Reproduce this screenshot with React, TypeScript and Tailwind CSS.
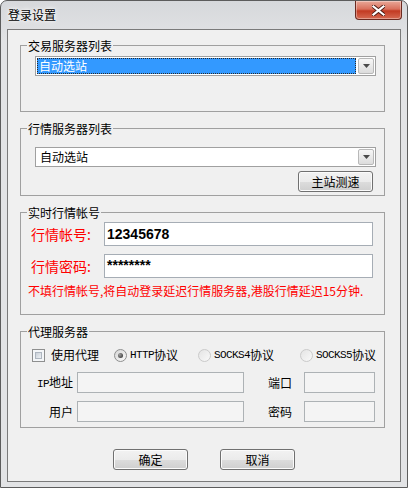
import React from 'react';

function Combo({ selected }: { selected?: boolean }) {
  return (
    <div className="flex h-[20px] w-[341px] items-stretch border border-[#a0a0a0] bg-white p-[1px]">
      {selected ? (
        <div className="flex flex-1 items-center border border-dotted border-[#2a2a2a] bg-[#3399ff] pl-[1px] text-[12px] leading-[14px] text-white">自动选站</div>
      ) : (
        <div className="flex flex-1 items-center pl-[3px] text-[12px] leading-[14px] text-black">自动选站</div>
      )}
      <div className="ml-[2px] flex w-[16px] items-center justify-center rounded-[2px] border border-[#b8b8b8] bg-[linear-gradient(to_bottom,#f7f7f7,#dcdcdc)]">
        <svg width="7" height="4" viewBox="0 0 7 4">
          <path d="M0 0h7L3.5 4z" fill="#4a4a4a" />
        </svg>
      </div>
    </div>
  );
}

function Btn({ label }: { label: string }) {
  return (
    <div className="flex h-[21px] w-[75px] items-center justify-center rounded-[3px] border border-[#707070] bg-[linear-gradient(to_bottom,#f2f2f2_0%,#ebebeb_50%,#dddddd_51%,#cfcfcf_100%)] text-[12px] leading-[14px] shadow-[inset_0_0_0_1px_#fbfbfb]">
      {label}
    </div>
  );
}

function Radio({ checked }: { checked?: boolean }) {
  return checked ? (
    <div className="flex h-[13px] w-[13px] items-center justify-center rounded-full border border-[#8e8f8f] bg-[linear-gradient(135deg,#d6d6d6,#fafafa)]">
      <div className="h-[5px] w-[5px] rounded-full bg-[radial-gradient(circle_at_35%_35%,#a0a0a0,#262626)]" />
    </div>
  ) : (
    <div className="h-[13px] w-[13px] rounded-full border border-[#cacaca] bg-[linear-gradient(135deg,#e4e4e4,#f9f9f9)]" />
  );
}

function Proto({ latin }: { latin: string }) {
  return (
    <span className="flex items-center text-[12px] leading-[16px]">
      <span className="font-['Liberation_Mono',monospace] text-[11px] tracking-[-0.6px]">{latin}</span>
      协议
    </span>
  );
}

export default function App() {
  return (
    <div className="h-[488px] w-[408px] overflow-hidden rounded-t-[7px] border border-[#5c5c5c] bg-[linear-gradient(to_bottom,#d6d8db,#e2e3e5_40px,#e2e3e5)] font-['Noto_Sans_CJK_SC',sans-serif] text-[12px] text-black">
      {/* Title bar */}
      <div className="flex h-[28px] items-start">
        <div className="pl-[7px] pt-[6px] text-[12px] leading-[16px] [text-shadow:0_0_6px_#fff,0_0_3px_#fff]">登录设置</div>
        <div className="ml-auto mr-[5px] flex h-[19px] w-[47px] items-center justify-center rounded-b-[4px] border border-t-0 border-[#6b2a20] bg-[linear-gradient(to_bottom,#e9a898_0%,#d9705c_45%,#c23a22_55%,#d66a52_100%)] shadow-[inset_0_0_0_1px_rgba(255,255,255,0.35)]">
          <svg width="13" height="11" viewBox="0 0 13 11">
            <path d="M1.5 1.5l10 8M11.5 1.5l-10 8" stroke="#4a1a12" strokeWidth="4" strokeLinecap="square" />
            <path d="M1.5 1.5l10 8M11.5 1.5l-10 8" stroke="#fff" strokeWidth="2.2" strokeLinecap="square" />
          </svg>
        </div>
      </div>

      {/* Client area */}
      <div className="mx-[6px] flex h-[453px] flex-col border border-[#7a7a7a] bg-[#f0f0f0]">
        {/* 交易服务器列表 */}
        <fieldset className="ml-[12px] mt-[8px] w-[365px] border border-[#a0a0a0] px-0 pb-[35px]">
          <legend className="ml-[6px] px-[1px] text-[12px] leading-[15px]">交易服务器列表</legend>
          <div className="pl-[14px] pt-[3px]">
            <Combo selected />
          </div>
        </fieldset>

        {/* 行情服务器列表 */}
        <fieldset className="ml-[12px] mt-[9px] w-[365px] border border-[#a0a0a0] px-0 pb-[3px]">
          <legend className="ml-[6px] px-[1px] text-[12px] leading-[15px]">行情服务器列表</legend>
          <div className="pl-[14px] pt-[11px]">
            <Combo />
          </div>
          <div className="mt-[4px] flex justify-end pr-[11px]">
            <Btn label="主站测速" />
          </div>
        </fieldset>

        {/* 实时行情帐号 */}
        <fieldset className="ml-[12px] mt-[9px] w-[365px] border border-[#a0a0a0] px-0 pb-[15px]">
          <legend className="ml-[6px] px-[1px] text-[12px] leading-[15px]">实时行情帐号</legend>
          <div className="flex items-center pl-[10px] pt-[2px]">
            <span className="w-[73px] text-[14px] leading-[24px] text-[#ff0000]">行情帐号:</span>
            <div className="flex h-[24px] w-[269px] items-center border border-[#a6adb5] bg-white pl-[2px] font-['Liberation_Sans',sans-serif] text-[14px] font-bold">12345678</div>
          </div>
          <div className="mt-[8px] flex items-center pl-[10px]">
            <span className="w-[73px] text-[14px] leading-[24px] text-[#ff0000]">行情密码:</span>
            <div className="flex h-[24px] w-[269px] items-start border border-[#a6adb5] bg-white pl-[2px] pt-[2px] font-['Liberation_Sans',sans-serif] text-[14px] font-bold leading-[16px]">********</div>
          </div>
          <div className="mt-[5px] pl-[7px] text-[12px] leading-[16px] text-[#ff0000]">
            不填行情帐号,将自动登录延迟行情服务器,港股行情延迟15分钟.
          </div>
        </fieldset>

        {/* 代理服务器 */}
        <fieldset className="ml-[12px] mt-[9px] w-[365px] border border-[#a0a0a0] px-0 pb-[5px]">
          <legend className="ml-[6px] px-[1px] text-[12px] leading-[15px]">代理服务器</legend>
          <div className="flex h-[16px] items-center pl-[11px] pt-[0px] mt-[8px]">
            <div className="h-[13px] w-[13px] border border-[#8e8f8f] bg-[#f4f6f8] p-[2px]">
              <div className="h-full w-full border border-[#aeb6c0] bg-[linear-gradient(135deg,#c9d0d8,#eef1f4)]" />
            </div>
            <span className="ml-[6px] text-[12px] leading-[16px]">使用代理</span>
            <div className="ml-[15px]">
              <Radio checked />
            </div>
            <div className="ml-[3px]">
              <Proto latin="HTTP" />
            </div>
            <div className="ml-[20px]">
              <Radio />
            </div>
            <div className="ml-[3px]">
              <Proto latin="SOCKS4" />
            </div>
            <div className="ml-[26px]">
              <Radio />
            </div>
            <div className="ml-[3px]">
              <Proto latin="SOCKS5" />
            </div>
          </div>

          <div className="mt-[9px] flex items-center">
            <span className="w-[52px] text-right text-[12px] leading-[16px]">
              <span className="font-['Liberation_Mono',monospace] text-[11px] tracking-[-0.6px]">IP</span>地址
            </span>
            <div className="ml-[4px] h-[21px] w-[167px] border border-[#adb2b5] bg-[#f4f4f4]" />
            <span className="ml-[24px] w-[36px] text-[12px] leading-[16px]">端口</span>
            <div className="h-[21px] w-[71px] border border-[#adb2b5] bg-[#f4f4f4]" />
          </div>

          <div className="mt-[8px] flex items-center">
            <span className="w-[52px] text-right text-[12px] leading-[16px]">用户</span>
            <div className="ml-[4px] h-[21px] w-[167px] border border-[#adb2b5] bg-[#f4f4f4]" />
            <span className="ml-[24px] w-[36px] text-[12px] leading-[16px]">密码</span>
            <div className="h-[21px] w-[71px] border border-[#adb2b5] bg-[#f4f4f4]" />
          </div>
        </fieldset>

        {/* Buttons */}
        <div className="mt-[21px] flex gap-[32px] pl-[105px]">
          <Btn label="确定" />
          <Btn label="取消" />
        </div>
      </div>
    </div>
  );
}
